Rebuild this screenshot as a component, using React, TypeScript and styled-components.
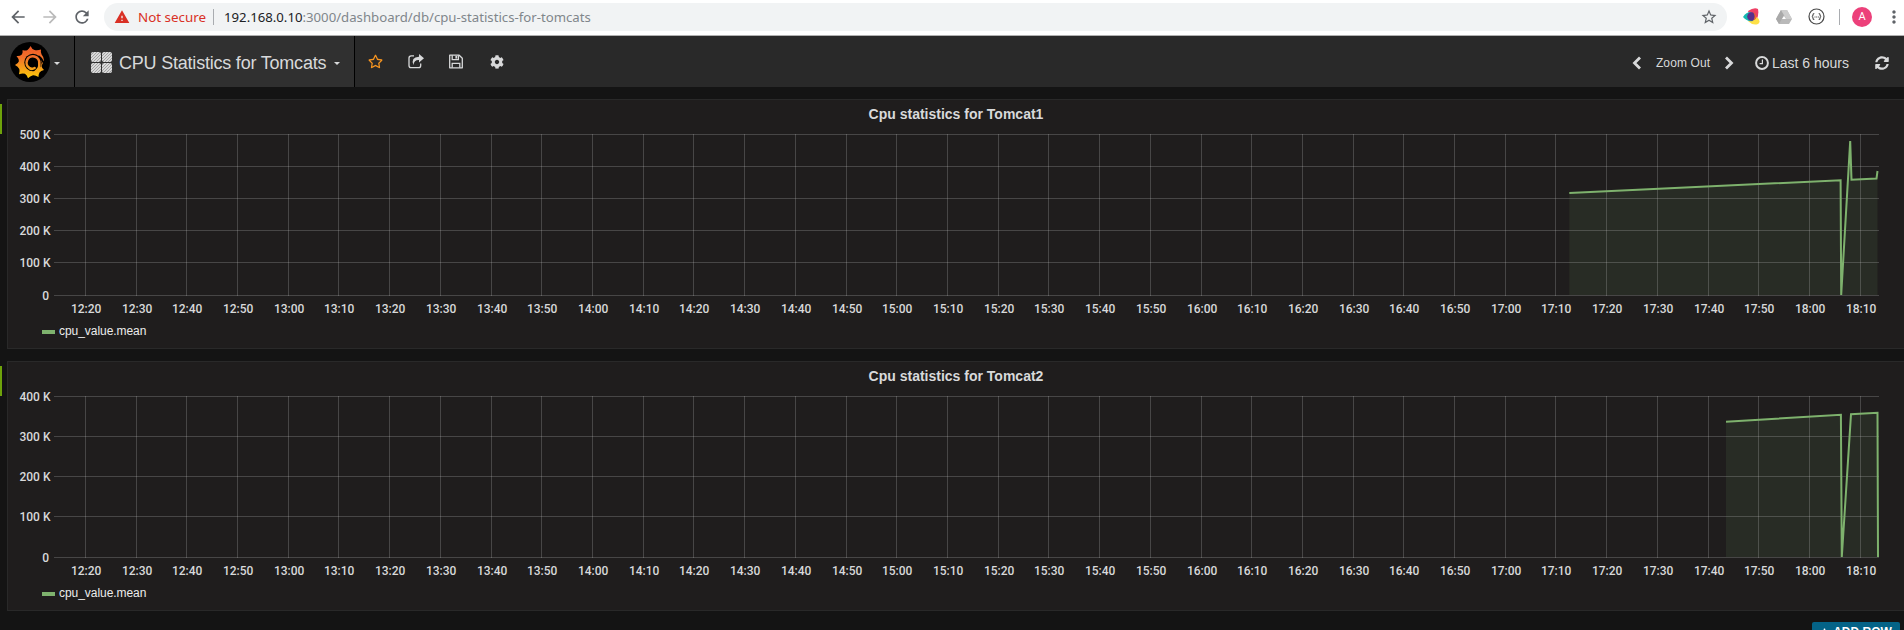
import React from 'react';
import styled, { createGlobalStyle } from 'styled-components';
import { FaRegStar, FaSyncAlt, FaCog, FaPlus } from 'react-icons/fa';
import { MdArrowBack, MdArrowForward, MdRefresh, MdWarning, MdStarBorder, MdMoreVert } from 'react-icons/md';

const Global = createGlobalStyle`
  * { box-sizing: border-box; }
  html, body { margin: 0; background: #141414; overflow: hidden; }
  svg { display: block; flex: none; }
`;

const Page = styled.div`
  display: flex;
  flex-direction: column;
  width: 1904px;
  height: 630px;
  overflow: hidden;
  background: #141414;
  color: #d8d9da;
  font-family: "Liberation Sans", Arial, sans-serif;
`;

const BrowserBar = styled.header`
  display: flex;
  align-items: center;
  flex: none;
  height: 36px;
  padding: 0 0 2px 8px;
  background: #fff;
  border-bottom: 1px solid #b0b0b0;
  font-family: "Noto Sans", "Open Sans", sans-serif;
  color: #5f6368;
`;

const NavIcon = styled.span<{ $dim?: boolean }>`
  width: 32px;
  color: ${p => (p.$dim ? '#bababa' : '#5f6368')};
  svg { width: 20px; height: 20px; }
`;

const AddressBar = styled.div`
  display: flex;
  align-items: center;
  flex: none;
  width: 1623px;
  height: 28px;
  border-radius: 14px;
  background: #f1f3f4;
  padding: 0 9px 0 10px;
  white-space: nowrap;
`;

const NotSecure = styled.span`
  width: 83px;
  padding-left: 8px;
  color: #d93025;
  font-size: 13.4px;
`;

const Divider = styled.span`
  width: 1px;
  height: 16px;
  background: #a9acb0;
`;

const Url = styled.span`
  flex: 1;
  padding-left: 10px;
  color: #80868b;
  font-size: 13.2px;
  b { font-weight: 400; color: #202124; }
`;

const Extensions = styled.div`
  display: flex;
  align-items: center;
  gap: 16px;
  margin: 0 14px 0 16px;
`;

const Avatar = styled.span`
  flex: none;
  width: 20px;
  height: 20px;
  margin: 0 12px 0 12px;
  border-radius: 50%;
  background: #ec407a;
  color: #fff;
  font: 11px/20px Roboto, sans-serif;
  text-align: center;
`;

const Toolbar = styled.nav`
  display: flex;
  align-items: stretch;
  flex: none;
  height: 51px;
  background: #292929;
`;

const Brand = styled.div`
  display: flex;
  align-items: center;
  gap: 4px;
  width: 75px;
  padding: 1px 0 0 10px;
  background: #303030;
  border-right: 1px solid #000;
`;

const DashboardPicker = styled.div`
  display: flex;
  align-items: center;
  width: 280px;
  padding: 2px 0 0 16px;
  background: #303030;
  border-right: 1px solid #000;
  font-size: 18px;
  white-space: nowrap;
`;

const PickerName = styled.span`
  margin: 1px 8px 0 7px;
  letter-spacing: -0.21px;
`;

const Caret = styled.i`
  border: solid transparent;
  border-width: 3.5px 3.5px 0;
  border-top-color: #d8d9da;
  margin-top: 2px;
`;

const ToolActions = styled.div`
  display: flex;
  align-items: center;
`;

const ToolButton = styled.span`
  display: flex;
  justify-content: center;
  width: 40.5px;
`;

const TimeControls = styled.div`
  display: flex;
  align-items: center;
  margin-left: auto;
  padding: 2px 15px 0 0;
  white-space: nowrap;
`;

const ZoomOut = styled.span`
  width: 55px;
  margin: 0 13px 0 14px;
  font-size: 12px;
  letter-spacing: 0.1px;
`;

const TimeRange = styled.span`
  display: flex;
  align-items: center;
  gap: 3px;
  margin: 0 26px 0 21px;
  font-size: 14px;
`;

const Rows = styled.main`
  display: flex;
  flex-direction: column;
  gap: 12px;
  padding-top: 12px;
`;

const Row = styled.section`
  display: flex;
  height: 250px;
`;

const RowHandle = styled.div`
  width: 2px;
  height: 30px;
  margin: 5px 5px 0 0;
  background: #6ea30b;
`;

const Panel = styled.article`
  flex: 1;
  display: flex;
  flex-direction: column;
  border: 1px solid #292929;
  border-right: 0;
  background: #1f1d1d;
`;

const PanelTitle = styled.h2`
  margin: 0;
  padding-top: 6px;
  height: 23px;
  font-size: 14px;
  line-height: 17px;
  text-align: center;
`;

const Graph = styled.svg`
  width: 1896px;
  height: 200px;
  font-family: Roboto, sans-serif;
  font-size: 12px;
  font-weight: 500;
  fill: #d8d9da;
`;

const Legend = styled.div`
  display: flex;
  align-items: center;
  gap: 4px;
  padding-left: 34px;
  height: 16px;
  font: 12px/16px "Liberation Sans", Arial, sans-serif;
  letter-spacing: -0.05px;
  color: #ececec;
`;

const Swatch = styled.i`
  width: 13px;
  height: 4px;
  margin-top: 2px;
  background: #7eb26d;
`;

const Footer = styled.footer`
  display: flex;
  justify-content: flex-end;
  margin-top: 11px;
  padding-right: 4px;
`;

const AddRow = styled.button`
  display: flex;
  align-items: center;
  justify-content: center;
  gap: 4px;
  flex: none;
  width: 88px;
  height: 21px;
  padding: 0;
  border: 0;
  border-radius: 2px 2px 0 0;
  background: #046387;
  color: #fff;
  font: bold 12px/15px "Liberation Sans", sans-serif;
`;

const times = Array.from({ length: 36 }, (_, i) => {
  const m = 740 + i * 10;
  return `${Math.floor(m / 60)}:${String(m % 60).padStart(2, '0')}`;
});

type Point = [number, number];
interface ChartProps { title: string; ticks: [string, number][]; points: Point[] }

function ChartRow({ title, ticks, points }: ChartProps) {
  const line = points.map(p => p.join(',')).join(' ');
  const area = `${points[0][0]},172 ${line} ${points[points.length - 1][0]},172`;
  return (
    <Row>
      <RowHandle />
      <Panel>
        <PanelTitle>{title}</PanelTitle>
        <Graph viewBox="0 0 1896 200">
          <polygon points={area} fill="#7eb26d" fillOpacity="0.1" />
          {times.map((t, i) => {
            const x = Math.floor(77.4 + i * 50.71);
            return (
              <g key={t}>
                <rect x={x} y="11" width="1" height="162" fill="#c8c8c8" fillOpacity="0.24" />
                <text x={x + 1.2} y="190" textAnchor="middle">{t}</text>
              </g>
            );
          })}
          {ticks.map(([label, y]) => (
            <g key={label}>
              <rect x="46" y={y} width="1825" height="1" fill="#c8c8c8" fillOpacity="0.24" />
              <text x={label === '0' ? 41 : 42.5} y={y + 5} textAnchor="end">{label}</text>
            </g>
          ))}
          <polyline points={line} fill="none" stroke="#7eb26d" strokeWidth="2" />
        </Graph>
        <Legend><Swatch />cpu_value.mean</Legend>
      </Panel>
    </Row>
  );
}

const GrafanaLogo = () => (
  <svg width="40" height="40" viewBox="0 0 40 40">
    <defs>
      <linearGradient id="flame" gradientUnits="userSpaceOnUse" x1="0" y1="4" x2="0" y2="36">
        <stop offset="0" stopColor="#f05a28" />
        <stop offset="0.35" stopColor="#f3702a" />
        <stop offset="1" stopColor="#fbca0a" />
      </linearGradient>
    </defs>
    <circle cx="20" cy="20" r="20" fill="#000" />
    <path fill="url(#flame)" d="M20.5 4Q21.8 7 24.5 8Q27.5 8.6 31 7.6Q30.4 10.5 31.6 12.4Q34 15 34 18.5L31.5 24Q32 26.5 34 28Q30.8 28.6 29.5 30.5Q28.5 32.5 28.5 35Q25.5 33 23 33.2Q20 34 18 36.2Q17 33 15 31.8Q12.5 31 9 32.2Q10 29 9.3 27Q8 24.5 5 23Q8.3 21.5 8.9 19.3Q8.8 16.5 6.5 14Q9.8 14.3 11.6 12.8Q13 11 12.6 8Q15.5 9 17.5 8Q19.5 6.5 20.5 4Z" />
    <circle cx="23" cy="20.5" r="8.7" fill="#000" />
    <path fill="none" stroke="#000" strokeWidth="2" strokeLinecap="round" d="M29 14.5Q32 16.5 33.2 20" />
    <path fill="none" stroke="url(#flame)" strokeWidth="2.6" strokeLinecap="round" d="M25.5 29.5Q30 26.5 29.3 21.3A6.4 6.4 0 1 0 19.6 26.2Q22 27.6 24.6 26" />
  </svg>
);

const GridIcon = () => (
  <svg width="21" height="21" viewBox="0 0 21 21">
    <defs>
      <pattern id="hatch" width="3" height="3" patternUnits="userSpaceOnUse">
        <rect width="3" height="3" fill="#d9d9d9" />
        <rect x="2" width="1" height="1" fill="#a2a2a2" />
        <rect x="1" y="1" width="1" height="1" fill="#a2a2a2" />
        <rect y="2" width="1" height="1" fill="#a2a2a2" />
      </pattern>
    </defs>
    {[0, 11].map(x => [0, 11].map(y => <rect key={`${x}-${y}`} x={x} y={y} width="10" height="10" rx="2" fill="url(#hatch)" />))}
  </svg>
);

const ShareIcon = () => (
  <svg width="16" height="15" viewBox="0 0 16 15">
    <path d="M6 1.8H3.2Q1 1.8 1 4V11.5Q1 13.7 3.2 13.7H10.5Q12.7 13.7 12.7 11.5V9.5" fill="none" stroke="#d8d9da" strokeWidth="1.3" />
    <path d="M11 0L16 4.3L11 8.6V6Q6 5.8 5.5 11Q2.5 3.2 11 2.7Z" fill="#d8d9da" />
  </svg>
);

const SaveIcon = () => (
  <svg width="14" height="15" viewBox="0 0 14 15" fill="none" stroke="#d8d9da" strokeWidth="1.3">
    <path d="M.7 1.2H10.2L13.3 4.3V13.8H.7Z" strokeLinejoin="round" />
    <path d="M3.2 1.2V5.6H9.4V1.2M3.2 13.8V9.3H10.8V13.8" />
    <path d="M6.4 2H8.2V4.6H6.4Z" fill="#d8d9da" stroke="none" />
  </svg>
);

const Chevron = ({ right }: { right?: boolean }) => (
  <svg width="10" height="14" viewBox="0 0 10 14">
    <path d={right ? 'M2 1.5L7.5 7L2 12.5' : 'M8 1.5L2.5 7L8 12.5'} fill="none" stroke="#d8d9da" strokeWidth="2.8" />
  </svg>
);

const ClockIcon = () => (
  <svg width="14" height="14" viewBox="0 0 14 14" fill="none" stroke="#d8d9da">
    <circle cx="7" cy="7" r="5.9" strokeWidth="2" />
    <path d="M7.4 3.5V7.6H4.6" strokeWidth="1.2" />
  </svg>
);

const ColorExtension = () => (
  <svg width="17" height="17" viewBox="0 0 17 17">
    <path d="M5 3Q11-1 15 1Q16 6 14 11L7 9Z" fill="#ef4065" />
    <path d="M10 8L15 10Q18 14 15 16Q10 18 5 13Z" fill="#fde047" />
    <path d="M0 9Q3 4 8 4L10 13Q4 14 0 9Z" fill="#15b8b0" />
    <circle cx="8.5" cy="8.5" r="4.3" fill="#5b2d8c" />
    <path d="M10 4.3Q14 6 13 11L10.5 12Q13 8 10 4.3Z" fill="#f26b2c" />
  </svg>
);

const DriveExtension = () => (
  <svg width="16" height="14" viewBox="0 0 16 14">
    <path d="M5 0H11L16 9L13 14H3L0 9Z" fill="#b9b9b9" />
    <path d="M5 0L8 5L3 14L0 9Z" fill="#a9a9a9" />
    <path d="M5 0H11L16 9H10.3Z" fill="#cdcdcd" />
    <path d="M8 6L10 9H6Z" fill="#fff" />
  </svg>
);

const BracesExtension = () => (
  <svg width="17" height="17" viewBox="0 0 17 17" fill="none" stroke="#4a4a4a">
    <circle cx="8.5" cy="8.5" r="7.5" strokeWidth="1.2" />
    <path d="M6.3 5.5Q5 5.5 5 6.8Q5 8.5 3.8 8.5Q5 8.5 5 10.2Q5 11.5 6.3 11.5M10.7 5.5Q12 5.5 12 6.8Q12 8.5 13.2 8.5Q12 8.5 12 10.2Q12 11.5 10.7 11.5" strokeWidth="1.1" />
    <path d="M6.5 9H11" strokeDasharray="1 .7" />
  </svg>
);

export default function App() {
  return (
    <Page>
      <Global />
      <BrowserBar>
        <NavIcon><MdArrowBack /></NavIcon>
        <NavIcon $dim><MdArrowForward /></NavIcon>
        <NavIcon><MdRefresh /></NavIcon>
        <AddressBar>
          <MdWarning size={16} color="#d93025" />
          <NotSecure>Not secure</NotSecure>
          <Divider />
          <Url><b>192.168.0.10</b>:3000/dashboard/db/cpu-statistics-for-tomcats</Url>
          <MdStarBorder size={18} />
        </AddressBar>
        <Extensions>
          <ColorExtension />
          <DriveExtension />
          <BracesExtension />
        </Extensions>
        <Divider />
        <Avatar>A</Avatar>
        <MdMoreVert size={20} />
      </BrowserBar>
      <Toolbar>
        <Brand><GrafanaLogo /><Caret /></Brand>
        <DashboardPicker>
          <GridIcon />
          <PickerName>CPU Statistics for Tomcats</PickerName>
          <Caret />
        </DashboardPicker>
        <ToolActions>
          <ToolButton><FaRegStar size={15} color="#f79520" /></ToolButton>
          <ToolButton><ShareIcon /></ToolButton>
          <ToolButton><SaveIcon /></ToolButton>
          <ToolButton><FaCog size={14} /></ToolButton>
        </ToolActions>
        <TimeControls>
          <Chevron />
          <ZoomOut>Zoom Out</ZoomOut>
          <Chevron right />
          <TimeRange><ClockIcon />Last 6 hours</TimeRange>
          <FaSyncAlt size={14} />
        </TimeControls>
      </Toolbar>
      <Rows>
        <ChartRow
          title="Cpu statistics for Tomcat1"
          ticks={[['500 K', 11], ['400 K', 43], ['300 K', 75], ['200 K', 107], ['100 K', 139], ['0', 172]]}
          points={[[1561.3, 70], [1832.6, 57.2], [1833.2, 172], [1842.2, 18], [1843.5, 56.7], [1868.5, 55.5], [1869.5, 48]]}
        />
        <ChartRow
          title="Cpu statistics for Tomcat2"
          ticks={[['400 K', 11], ['300 K', 51], ['200 K', 91], ['100 K', 131], ['0', 172]]}
          points={[[1718, 36.7], [1832.9, 29.7], [1833.8, 172], [1843, 29.2], [1869.5, 27.7], [1870, 172]]}
        />
      </Rows>
      <Footer><AddRow><FaPlus size={9} />ADD ROW</AddRow></Footer>
    </Page>
  );
}
